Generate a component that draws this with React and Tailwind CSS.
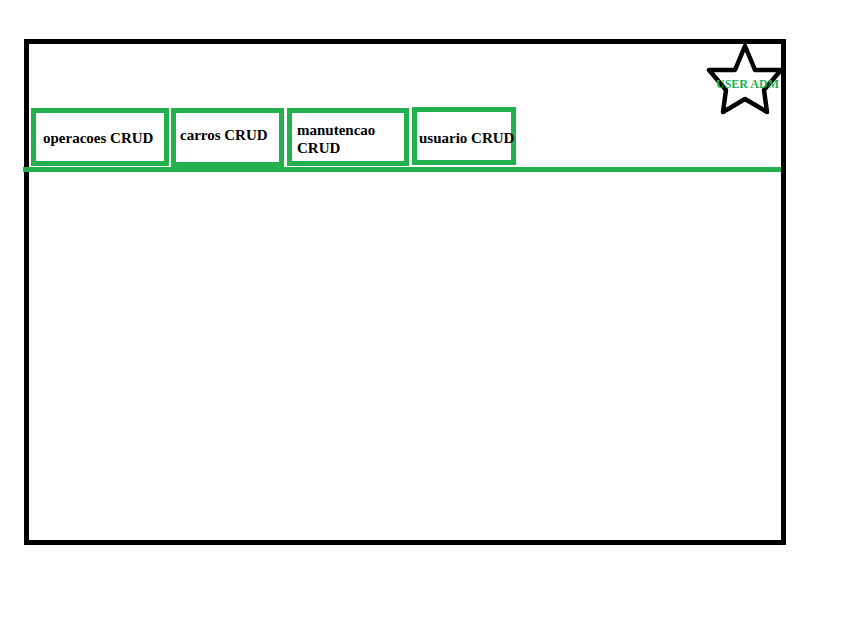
export default function App() {
  const tab =
    "border-[5px] border-[#22b14c] text-[15px] leading-[17px] font-bold text-black whitespace-nowrap";
  return (
    <div className="w-[853px] h-[641px] bg-white pt-[39px] pl-[24px] font-['Liberation_Serif',serif]">
      <div className="relative w-[762px] h-[506px] border-[5px] border-black">
        <div className="flex items-start mt-[63px] pl-[2px]">
          <div className={`mt-[1px] w-[138px] h-[58px] pl-[7px] pt-[17px] ${tab}`}>
            operacoes CRUD
          </div>
          <div className={`ml-[2px] mt-[1px] w-[113px] h-[59px] pl-[4px] pt-[14px] ${tab}`}>
            carros CRUD
          </div>
          <div
            className={`ml-[3px] mt-[1px] w-[122px] h-[58px] pl-[5px] pt-[8px] border-[5px] border-[#22b14c] text-[15px] leading-[18px] font-bold text-black`}
          >
            <div>manutencao</div>
            <div>CRUD</div>
          </div>
          <div className={`ml-[3px] w-[104px] h-[58px] pl-[2px] pt-[18px] ${tab}`}>
            usuario CRUD
          </div>
        </div>
        <div className="ml-[-6px] h-[5px] bg-[#22b14c]" />

        <svg
          className="absolute left-[671px] top-[-6px]"
          width="90"
          height="82"
          viewBox="700 38 90 82"
        >
          <polygon
            points="745,46 755,70 781,70 764,90 767,112 745,99 723,112 726,90 709,70 735,70"
            fill="none"
            stroke="#000"
            strokeWidth="4.5"
            strokeLinejoin="round"
          />
        </svg>
        <span className="absolute left-[687px] top-[33px] text-[12px] leading-[14px] font-bold text-[#22b14c] whitespace-nowrap">
          USER ADM
        </span>
      </div>
    </div>
  );
}
